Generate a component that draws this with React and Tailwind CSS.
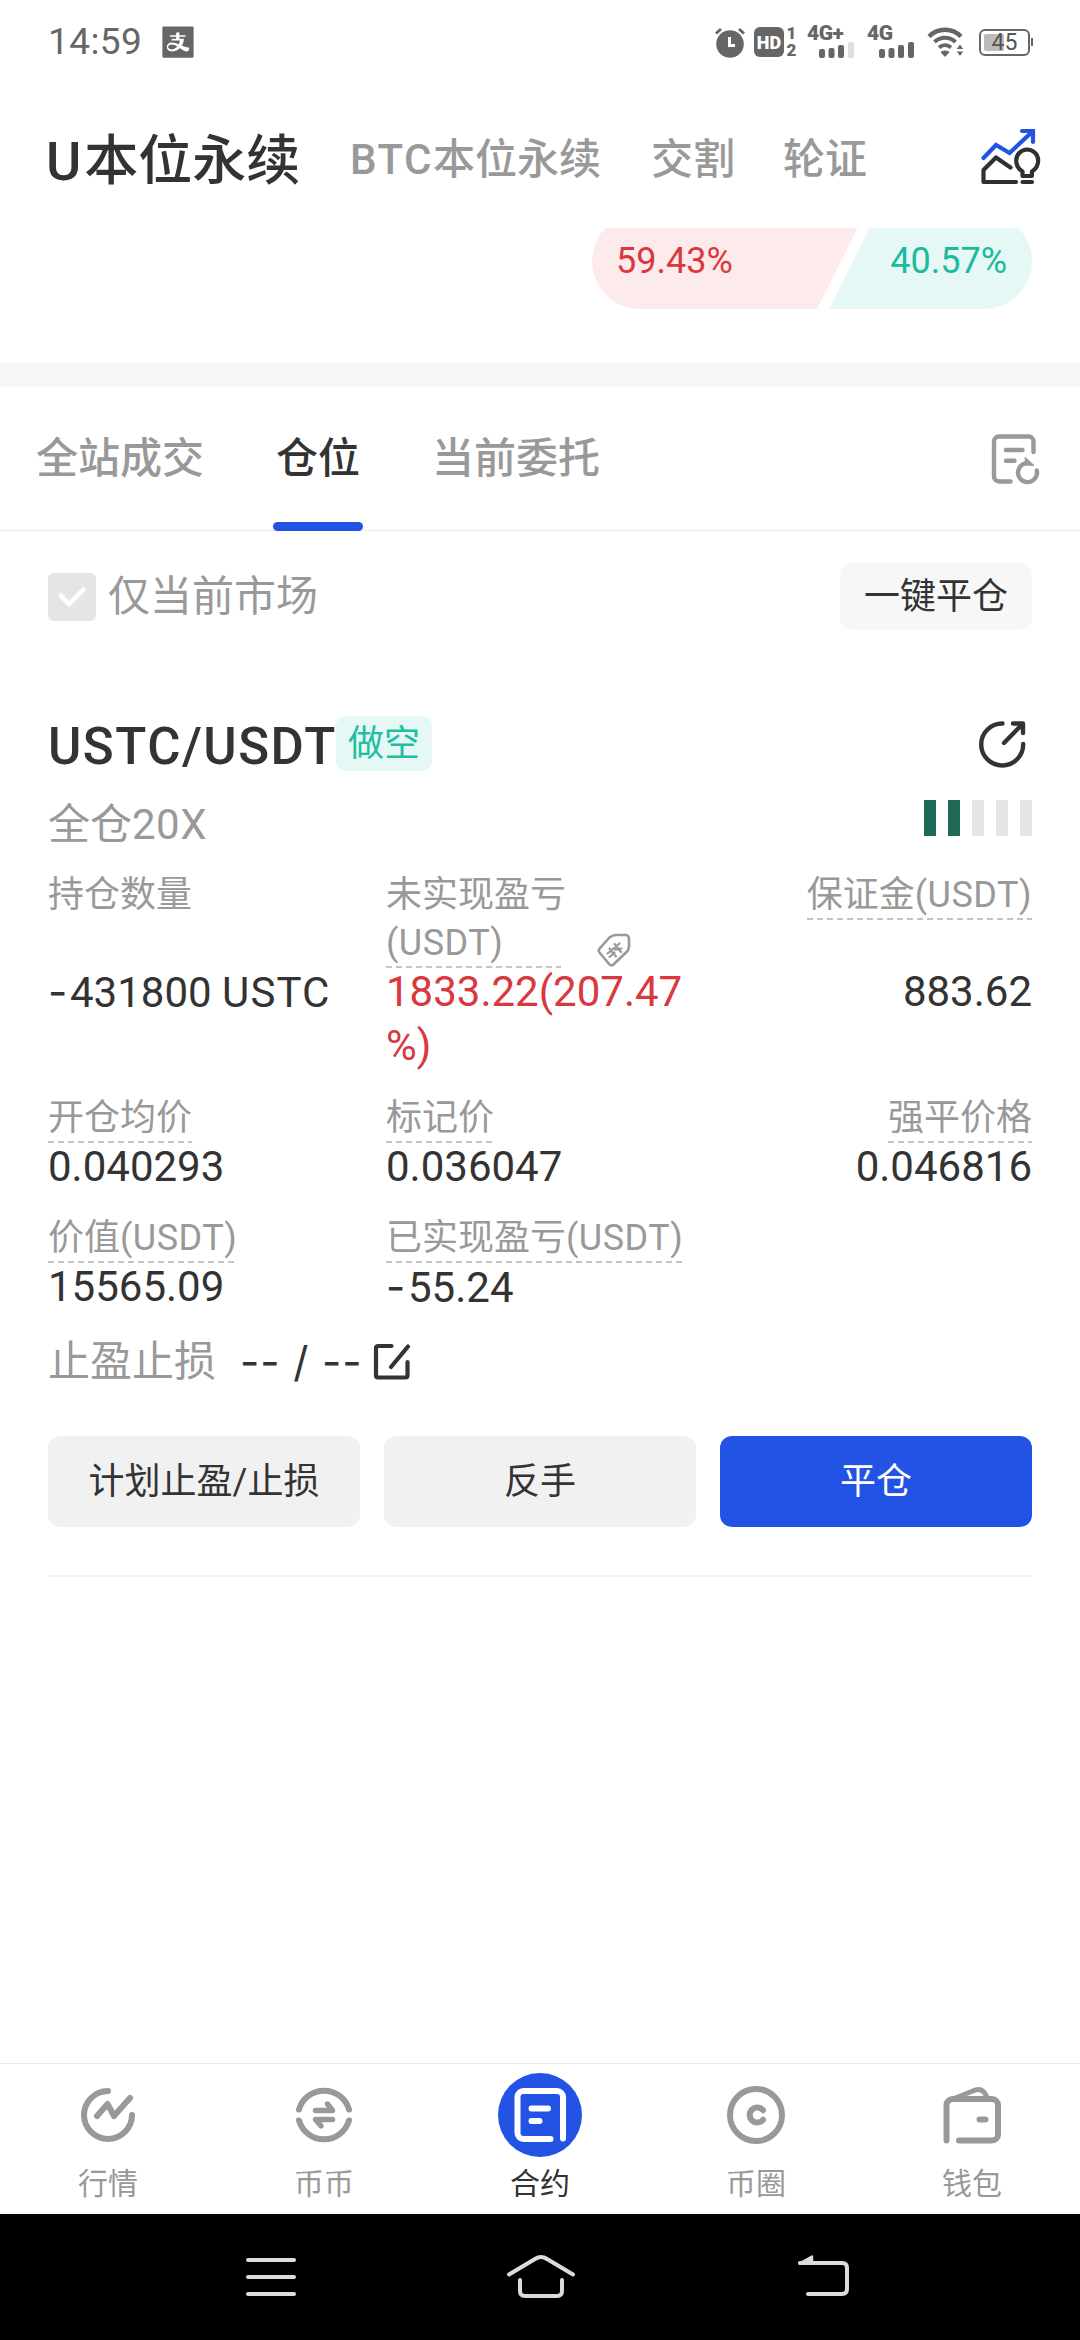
import { AiFillAlipaySquare } from 'react-icons/ai';

function StatusBar() {
  return (
    <div className="flex h-[84px] items-center justify-between pl-12 pr-[47px] text-[#666]">
      <div className="flex items-center">
        <span className="w-[94px] text-[37px] leading-[42px] tracking-[0.4px]">14:59</span>
        <AiFillAlipaySquare className="ml-[16px] size-[40px]" />
      </div>
      <div className="flex items-center">
        <svg width="32" height="32" viewBox="0 0 32 32" fill="none">
          <circle cx="16" cy="18" r="13.8" fill="currentColor" />
          <path d="M2 7.500 7 3M30 7.500 25 3" stroke="currentColor" strokeWidth="3" />
          <path d="M15.500 11v8.500H21" stroke="#fff" strokeWidth="3" />
        </svg>
        <div className="ml-[8px] flex h-[30px] w-[30px] items-center justify-center rounded-[6px] bg-[#666] text-[18px] font-black text-white">HD</div>
        <div className="ml-[2px] flex w-[11px] flex-col items-center text-[17px] font-black leading-[17px]">
          <span>1</span>
          <span>2</span>
        </div>
        <Signal label="4G+" last="#dedede" />
        <Signal label="4G" last="#666" />
        <svg className="ml-[10px]" width="38" height="32" viewBox="0 0 38 32" fill="none" stroke="currentColor">
          <path d="M2 10.500a22.500 22.500 0 0 1 32 0" strokeWidth="4.400" />
          <path d="M7.500 16a15 15 0 0 1 21 0" strokeWidth="4" />
          <path d="M12 21.500a9 9 0 0 1 12 0" strokeWidth="3.700" />
          <path d="M18 24.500c-2 0-3.500.8-4.500 1.700L18 31l4.500-4.800c-1-.9-2.500-1.700-4.500-1.700z" fill="currentColor" stroke="none" />
          <path d="M33 18.500l3.200 4.500h-6.400zM33 30l3.200-4.500h-6.400z" fill="currentColor" stroke="none" />
        </svg>
        <div className="ml-[14px] flex items-center">
          <div className="relative flex h-[27px] w-[51px] items-center justify-center rounded-[6px] border-2 border-[#666]">
            <div className="absolute left-[3px] top-[3px] h-[17px] w-[20px] rounded-[2px] bg-[#bbb]" />
            <span className="relative text-[23px] leading-[23px] text-[#555]">45</span>
          </div>
          <div className="ml-px h-[8px] w-[2px] bg-[#666]" />
        </div>
      </div>
    </div>
  );
}

function Signal({ label, last }) {
  return (
    <div className="ml-[10px] w-[50px]">
      <div className="h-[14px] text-[21px] font-black leading-[13px] tracking-[-0.5px]">{label}</div>
      <svg className="ml-[12px]" width="36" height="17" viewBox="0 0 36 17" fill="currentColor">
        <rect y="8" width="6" height="9" rx="2" />
        <rect x="9.500" y="7" width="6" height="10" rx="2" />
        <rect x="19" y="4" width="6" height="13" rx="2" />
        <rect x="29" y="1" width="6" height="16" rx="2" fill={last} />
      </svg>
    </div>
  );
}

function Header() {
  return (
    <div className="flex h-[144px] items-center justify-between pl-[46px] pr-[37px]">
      <div className="flex items-center gap-12 pt-[7px] text-[42px] font-medium text-[#999]">
        <span className="w-[256px] whitespace-nowrap pt-[3px] text-[54px] text-[#333]">
          <span className="mr-[3px]">U</span>本位永续
        </span>
        <span className="w-[253px] whitespace-nowrap">
          <span className="tracking-[1.500px]">BTC</span>本位永续
        </span>
        <span>交割</span>
        <span>轮证</span>
      </div>
      <svg width="64" height="58" viewBox="0 0 64 58" fill="none" stroke="#2f3033" strokeWidth="4.200" strokeLinecap="round" strokeLinejoin="round">
        <path d="M4.500 31 17 18l13.500 8L53 5M43 4h11v11" stroke="#2353e4" strokeLinejoin="miter" />
        <path d="M31.500 40.500 17 30.500 4.500 43v12H37" />
        <path d="M43.500 49v-4.500c-3.600-2.300-6.300-6-6.300-11a11 11 0 0 1 22 0c0 5-2.700 8.700-6.300 11V49z" />
        <path d="M43.500 55h9.500" />
      </svg>
    </div>
  );
}

function RatioBar() {
  return (
    <div className="flex h-[135px] justify-end pr-12">
      <div className="h-[81px] w-[440px] overflow-hidden">
        <div className="-mt-[15px] flex h-24 items-center overflow-hidden rounded-full text-[36px]">
          <div className="flex h-full w-[273px] items-center bg-[#fdeaea] pl-6 text-[#d8393f] [clip-path:polygon(0_0,100%_0,225px_100%,0_100%)]">
            59.43%
          </div>
          <div className="-ml-[36px] flex h-full flex-1 items-center justify-end bg-[#e5f8f5] pr-[25px] text-[#1bba9b] [clip-path:polygon(48px_0,100%_0,100%_100%,0_100%)]">
            40.57%
          </div>
        </div>
      </div>
    </div>
  );
}

function SectionTabs() {
  return (
    <div className="flex h-[144px] justify-between border-b border-[#ececec] pl-9 pr-[38px]">
      <div className="flex gap-[72px] text-[42px] font-medium leading-[143px] text-[#999]">
        <span>全站成交</span>
        <span className="relative text-[#333]">
          仓位
          <i className="absolute -left-[3px] top-[135px] h-[9px] w-[90px] rounded-full bg-[#2353e4]" />
        </span>
        <span>当前委托</span>
      </div>
      <svg className="mt-[45px]" width="52" height="54" viewBox="0 0 52 54" fill="none" stroke="#999" strokeWidth="4.400" strokeLinecap="round" strokeLinejoin="round">
        <path d="M43.500 20V9.500a5 5 0 0 0-5-5H9a5 5 0 0 0-5 5v35a5 5 0 0 0 5 5h11.500M16 18h16.500M16 28.700h8.500" />
        <path d="M46.800 38.500a9.500 9.500 0 1 1-11.300-7.200" />
        <path d="M35.500 25.500l8.500 8-8.500-.500z" fill="#999" strokeWidth="1" />
      </svg>
    </div>
  );
}

const usdt = <span className="tracking-[0.5px]">(USDT)</span>;

function Label({ children, dashed = true }) {
  return (
    <div className="inline-block align-top">
      <div className="h-12 text-[36px] leading-[50px] text-[#999]">{children}</div>
      {dashed && <div className="h-[2px] bg-[repeating-linear-gradient(90deg,#c4c4c4_0_6px,transparent_6px_10px)]" />}
    </div>
  );
}

function Value({ negative, children, className = 'text-[#333]' }) {
  return (
    <div className={className}>
      <div className="-mt-[3px] mb-[3px] text-[42px] leading-[54px]">
        {negative && <span className="inline-block w-[22px] font-[Inter]">-</span>}
        {children}
      </div>
    </div>
  );
}

function Position() {
  return (
    <div className="px-12">
      <div className="flex h-[66px] items-start justify-between">
        <div className="flex items-start">
          <h2 className="mt-[1px] w-72 whitespace-nowrap text-[51px] font-medium leading-[60px] tracking-[1.500px] text-[#333]">USTC/USDT</h2>
          <span className="flex h-[55px] w-24 items-center justify-center rounded-[9px] bg-[#e6f8f5] text-[36px] leading-[50px] text-[#1fbf9f]">做空</span>
        </div>
        <svg className="mr-[4px] mt-[2px]" width="52" height="52" viewBox="0 0 52 52" fill="none" stroke="#333" strokeWidth="4.400" strokeLinecap="round" strokeLinejoin="round">
          <path d="M26.500 5.500A21 21 0 1 0 47.200 26" />
          <path d="M28 25 46.500 6M37 5.500h10V15" />
        </svg>
      </div>
      <div className="flex h-[88px] items-center justify-between">
        <span className="mt-[-3px] text-[42px] leading-[60px] text-[#999]">全仓<span className="tracking-[0.5px]">20X</span></span>
        <div className="mt-[-16px] flex gap-3">
          {[1, 1, 0, 0, 0].map((on, i) => (
            <i key={i} className={on ? 'h-9 w-3 bg-[#1f6a56]' : 'h-9 w-3 bg-[#e4e4e4]'} />
          ))}
        </div>
      </div>

      <div className="grid grid-cols-[338px_302px_1fr]">
        <div>
          <div className="h-[98px]"><Label dashed={false}>持仓数量</Label></div>
          <Value negative>431800 <span className="tracking-[1.100px]">USTC</span></Value>
        </div>
        <div>
          <div className="flex h-[98px]">
            <div className="w-[175px]">
              <div className="h-12 whitespace-nowrap text-[36px] leading-[50px] text-[#999]">未实现盈亏</div>
              <div className="h-12 text-[36px] leading-[50px] text-[#999]">{usdt}</div>
              <div className="h-[2px] bg-[repeating-linear-gradient(90deg,#c4c4c4_0_6px,transparent_6px_10px)]" />
            </div>
            <svg className="ml-[35px] mt-[62px] shrink-0" width="36" height="36" viewBox="0 0 36 36" fill="none" stroke="#999" strokeWidth="2.600" strokeLinecap="round" strokeLinejoin="round">
              <path d="M13.500 32.500 3.500 20.500a3 3 0 0 1 0-3.800L13.500 5.500Q16.500 3 20 3h9.500a3.500 3.500 0 0 1 3.500 3.500v7.500q0 3-1.500 5L17.500 32.500a2.600 2.600 0 0 1-4 0z" />
              <path d="M13.500 16.500l6.500 8M18.500 12l6.500 8M11.500 21.500l12-10M13.500 25l5-4.500M19 17.500l6.500-1" strokeWidth="2.200" />
            </svg>
          </div>
          <Value className="text-[#d8393f]">1833.22(207.47<br />%)</Value>
        </div>
        <div className="text-right">
          <div className="h-[98px]"><Label>保证金{usdt}</Label></div>
          <Value>883.62</Value>
        </div>
      </div>

      <div className="mt-[17px] grid grid-cols-[338px_302px_1fr] gap-y-4">
        <div>
          <Label>开仓均价</Label>
          <Value>0.040293</Value>
        </div>
        <div>
          <Label>标记价</Label>
          <Value>0.036047</Value>
        </div>
        <div className="text-right">
          <Label>强平价格</Label>
          <Value>0.046816</Value>
        </div>
        <div>
          <Label>价值{usdt}</Label>
          <Value>15565.09</Value>
        </div>
        <div>
          <Label>已实现盈亏{usdt}</Label>
          <Value negative>55.24</Value>
        </div>
      </div>

      <div className="mt-[14px] flex h-[60px] items-center text-[42px] leading-[60px]">
        <span className="text-[#999]">止盈止损</span>
        <span className="ml-[24px] w-[120px] whitespace-pre font-[Inter] tracking-[0.900px] text-[#333]">-- / --</span>
        <svg className="ml-[12px]" width="40" height="40" viewBox="0 0 40 40" fill="none" stroke="#333" strokeWidth="4.200" strokeLinecap="round" strokeLinejoin="round">
          <path d="M19.500 4H6a2 2 0 0 0-2 2v27.500a2 2 0 0 0 2 2h27.500a2 2 0 0 0 2-2V20M19 25 36 4.500" />
        </svg>
      </div>

      <div className="mt-[44px] grid grid-cols-3 gap-6 pb-12 text-[36px] leading-[88px] text-[#333]">
        <button className="h-[91px] rounded-xl bg-[#f1f1f1]">计划止盈/止损</button>
        <button className="h-[91px] rounded-xl bg-[#f1f1f1]">反手</button>
        <button className="h-[91px] rounded-xl bg-[#2353e4] text-white">平仓</button>
      </div>
      <div className="h-[2px] bg-[#f0f0f0]" />
    </div>
  );
}

function NavItem({ label, active, children }) {
  return (
    <div className="flex flex-col items-center pt-[9px]">
      <div className={active ? 'flex size-[84px] items-center justify-center rounded-full bg-[#2353e4] text-white' : 'flex size-[84px] items-center justify-center text-[#999]'}>
        <svg width="60" height="60" viewBox="0 0 60 60" fill="none" stroke="currentColor" strokeWidth="6" strokeLinecap="round" strokeLinejoin="round">
          {children}
        </svg>
      </div>
      <span className={active ? 'mt-[5px] text-[30px] leading-[44px] text-[#333]' : 'mt-[5px] text-[30px] leading-[44px] text-[#999]'}>{label}</span>
    </div>
  );
}

function TabBar() {
  return (
    <div className="grid h-[151px] grid-cols-5 border-t border-[#ececec]">
      <NavItem label="行情">
        <path d="M30 6a24 24 0 1 0 24 24M19 31 29.500 19l6.500 12L52 13" />
      </NavItem>
      <NavItem label="币币">
        <path d="M5 24.500a26 26 0 0 1 50 0M5 35.500a26 26 0 0 0 50 0" />
        <path d="M21.500 25.500H38.500L33.500 19M38.500 34.500H21.500L27 41" strokeWidth="5.400" />
      </NavItem>
      <NavItem label="合约" active>
        <path d="M53 53.500V12a6 6 0 0 0-6-6H13.500a6 6 0 0 0-6 6v36a6 6 0 0 0 6 6H40.500M21.500 23.500H38M21.500 36h8" />
      </NavItem>
      <NavItem label="币圈">
        <circle cx="30" cy="30" r="26" />
        <path d="M37 25.200a7.500 7.500 0 1 0 0 9.600" />
      </NavItem>
      <NavItem label="钱包">
        <path d="M4.500 55.500V20a6 6 0 0 1 6-6H50a6 6 0 0 1 6 6v29.500a6 6 0 0 1-6 6H17M37.500 34.500h6" />
        <path d="M7 15.500 34 4.800q7-2 11 7.500" strokeWidth="5" />
      </NavItem>
    </div>
  );
}

function SystemNav() {
  return (
    <div className="flex h-[126px] items-center bg-black pl-[240px] text-[#dcdcdc]">
      <svg width="62" height="50" viewBox="0 0 62 50" fill="none" stroke="currentColor" strokeWidth="4" strokeLinecap="round">
        <path d="M8 8h46M8 25h46M8 42h46" />
      </svg>
      <svg className="ml-[202px]" width="74" height="50" viewBox="0 0 74 50" fill="none" stroke="currentColor" strokeWidth="4" strokeLinecap="round">
        <path d="M5 22.500 31 7q6-4 12 0l26 15.500M16 28v11q0 5 5 5h32q5 0 5-5V28" />
      </svg>
      <svg className="ml-[212px]" width="62" height="50" viewBox="0 0 62 50" fill="none" stroke="currentColor" strokeWidth="4" strokeLinecap="round" strokeLinejoin="round">
        <path d="M10 11h42q5 0 5 5v21q0 5-5 5H18" />
        <path d="M9.500 11.500 22 4.500V11z" fill="currentColor" strokeWidth="2.500" />
      </svg>
    </div>
  );
}

export default function App() {
  return (
    <div className="flex h-[2340px] w-[1080px] flex-col bg-white font-[Roboto,'Noto_Sans_CJK_SC',sans-serif]">
      <StatusBar />
      <Header />
      <RatioBar />
      <div className="h-6 bg-[#f6f6f6]" />
      <SectionTabs />
      <div className="flex h-[185px] items-start justify-between px-12 pt-8">
        <div className="flex items-center pt-[10px] text-[42px] leading-[48px] text-[#999]">
          <span className="mr-3 flex size-12 items-center justify-center rounded-[6px] bg-[#e5e5e5]">
            <svg width="30" height="24" viewBox="0 0 30 24" fill="none" stroke="#fff" strokeWidth="4.500" strokeLinecap="round">
              <path d="M3.500 10.500 12 19 26.500 4.500" />
            </svg>
          </span>
          仅当前市场
        </div>
        <button className="h-[67px] w-48 rounded-xl bg-[#f7f7f7] text-[36px] leading-[64px] text-[#333]">一键平仓</button>
      </div>
      <Position />
      <div className="flex-1" />
      <TabBar />
      <SystemNav />
    </div>
  );
}
